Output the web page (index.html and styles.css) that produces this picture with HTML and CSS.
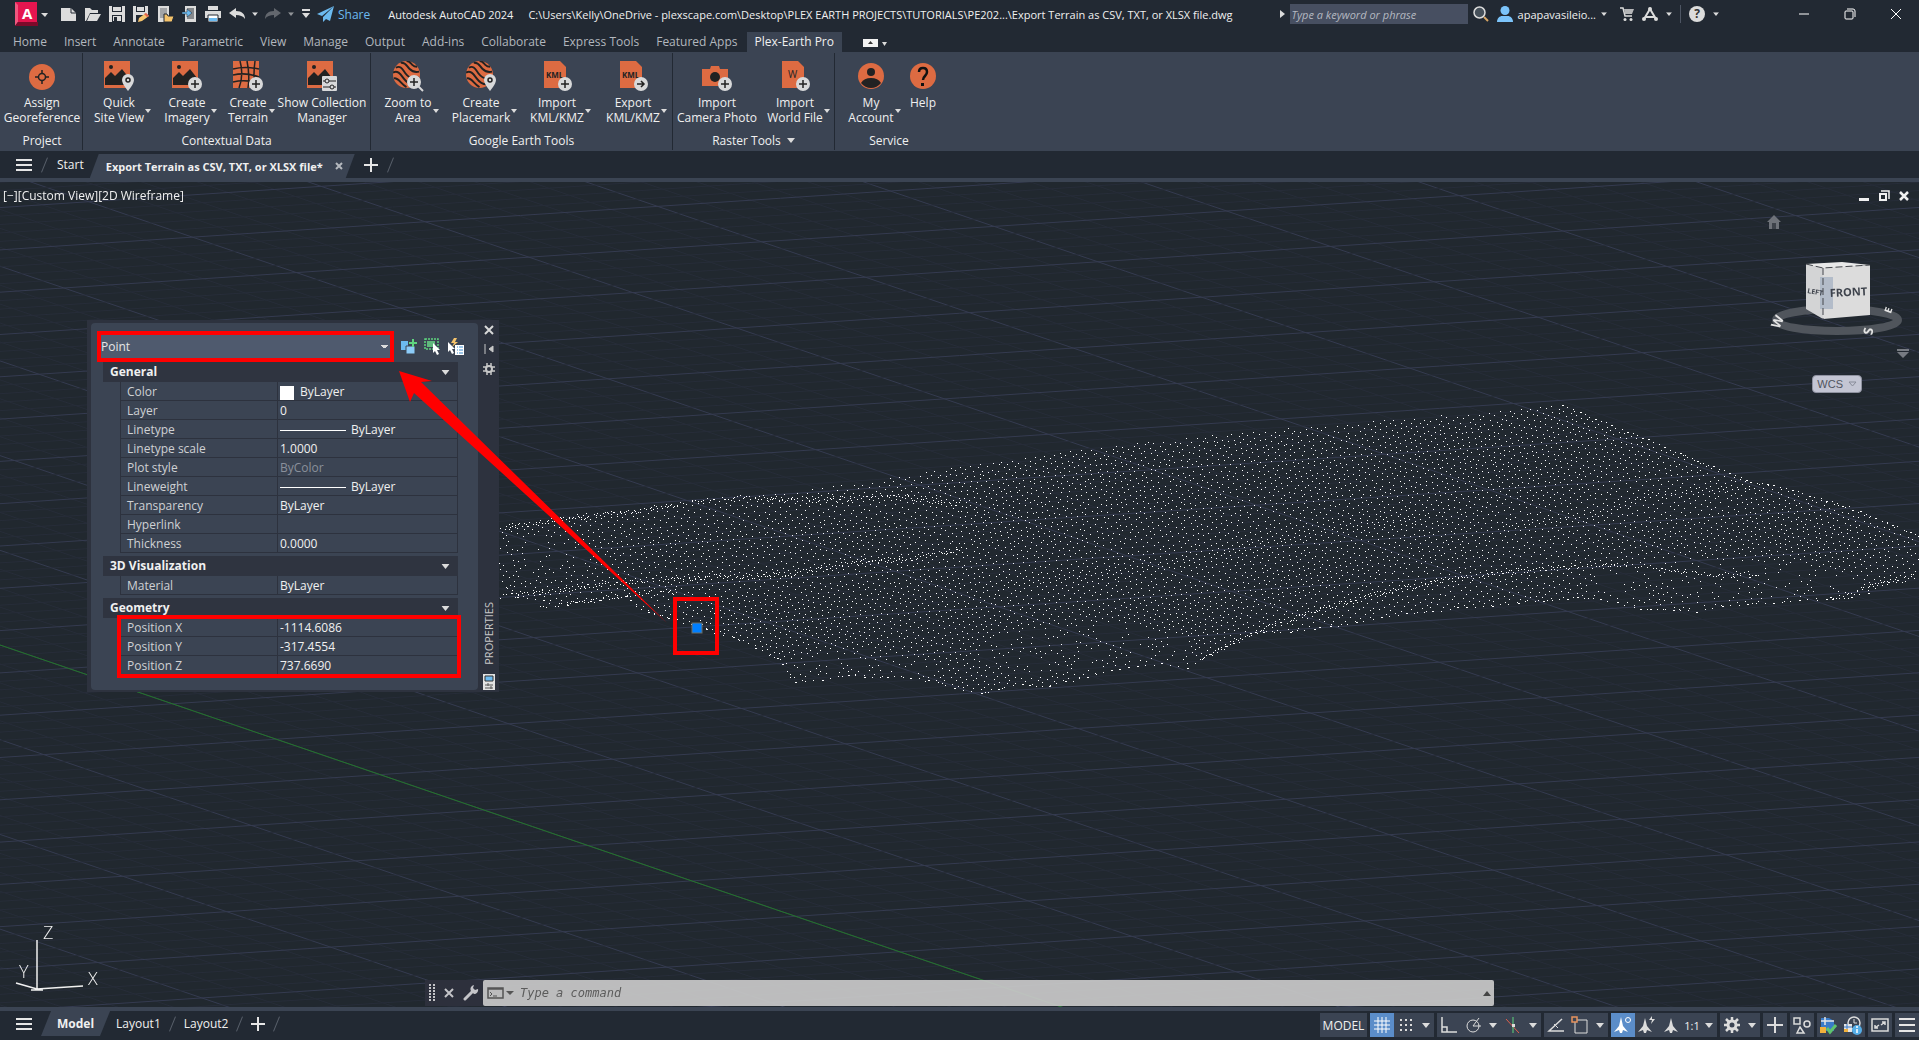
FILE: index.html
```html
<!DOCTYPE html>
<html lang="en">
  <head>
    <meta charset="UTF-8" />
    <meta name="viewport" content="width=device-width, initial-scale=1.0" />
    <title>Autodesk AutoCAD 2024</title>
    <link rel="stylesheet" href="styles.css">
  </head>
  <body>
    <!-- shared icon pieces -->
    <svg class="sprite" aria-hidden="true">
      <symbol id="caret" viewBox="0 0 8 5"><path d="M0 0h8L4 5z" fill="#dcdcdc" /></symbol>
      <symbol id="plus-badge" viewBox="0 0 14 14"><circle cx="7" cy="7" r="7" fill="#d8d9da" /><path d="M7 3v8M3 7h8" stroke="#222" stroke-width="1.5" /></symbol>
      <symbol id="pin" viewBox="0 0 12 17"><path d="M6 0a6 6 0 0 0-6 6c0 4 6 11 6 11s6-7 6-11a6 6 0 0 0-6-6z" fill="#d8d9da" /><circle cx="6" cy="6" r="2" fill="none" stroke="#222" stroke-width="1.5" /></symbol>
      <symbol id="photo" viewBox="0 0 26 27"><path d="M0 0h26v27H0z" fill="#dd6b42" /><path d="M1 24V17l6-6 4 4 7-7 7 9v7z" fill="#222" /><circle cx="7" cy="6" r="2" fill="#222" /></symbol>
      <symbol id="globe" viewBox="0 0 28 28"><circle cx="14" cy="14" r="14" fill="#dd6b42" /><path d="M3 7c5-3 7 2 10 6s7 7 14 4M8 2c5-1 6 3 9 6s6 4 10 3M14 0c3 0 4 2 6 4s3 2 5 2M0 12c5-3 8 2 11 6s6 7 12 6M1 18c5-1 7 6 13 9" fill="none" stroke="#222" stroke-width="2" /></symbol>
      <symbol id="sheet" viewBox="0 0 22 27"><path d="M0 0h16l6 6v21H0z" fill="#dd6b42" /></symbol>
    </svg>

    <header class="titlebar">
      <button class="app-logo" aria-label="Application menu">
        <svg width="34" height="26" viewBox="0 0 34 26"><path d="M1 1h22v20H1z" fill="#e5154f" /><path d="M1 1l3 3v17l-3 4z" fill="#f0577f" /><path d="M1 25l3-4h20v4z" fill="#7c0a2a" /><text x="8" y="18" font-size="15" font-weight="bold" fill="#fff">A</text><path d="M27 12h7l-3 4z" fill="#dcdcdc" /></svg>
      </button>
      <nav class="quick-access">
        <button aria-label="New"><svg width="18" height="18" viewBox="0 0 18 18"><path d="M1 3h10l5 5v8H1z" fill="#dcdcdc" /><path d="M11 3v5h5" fill="none" stroke="#222933" /></svg></button>
        <button aria-label="Open"><svg width="18" height="18" viewBox="0 0 18 18"><path d="M1 16V3h5l2 2h6v3H6l-4 8z" fill="#dcdcdc" /><path d="M6 9h11l-4 7H3z" fill="#dcdcdc" /></svg></button>
        <button aria-label="Save"><svg width="18" height="18" viewBox="0 0 18 18"><path d="M1 1h16v16H1z" fill="#dcdcdc" /><path d="M4 1h10v6H4zM4 10h10v7H4z" fill="#222933" /><path d="M5 2h8v4H5zM5 11h8v5H5z" fill="#dcdcdc" /><path d="M6 12h3v4H6z" fill="#222933" /></svg></button>
        <button aria-label="Save as"><svg width="18" height="18" viewBox="0 0 18 18"><path d="M1 1h15v8l-7 8H1z" fill="#dcdcdc" /><path d="M4 1h9v6H4zM4 10h8v7H4z" fill="#222933" /><path d="M5 2h7v4H5z" fill="#dcdcdc" /><path d="M6 17l1-4 7-5 3 3-7 5z" fill="#f5c36b" /><path d="M14 8l3 3-2 1-3-3z" fill="#e0604c" /></svg></button>
        <button aria-label="Open from mobile"><svg width="18" height="18" viewBox="0 0 18 18"><path d="M2 1h11v16H2z" fill="#dcdcdc" /><path d="M4 3h7v10H4z" fill="#a3a5a8" /><path d="M8 9h3l1 2h6l-2 6H8z" fill="#f5c36b" stroke="#222933" /></svg></button>
        <button aria-label="Save to mobile"><svg width="18" height="18" viewBox="0 0 18 18"><path d="M5 1h11v16H5z" fill="#dcdcdc" /><path d="M7 3h7v11H7z" fill="#85888c" /><path d="M2 7h5V4l5 4-5 4V9H2z" fill="#6cbaf0" stroke="#222933" stroke-width="0.5" /></svg></button>
        <button aria-label="Plot"><svg width="18" height="18" viewBox="0 0 18 18"><path d="M4 1h10v4H4zM1 6h16v7H1z" fill="#dcdcdc" /><path d="M4 10h10v7H4z" fill="#fff" stroke="#222933" /><path d="M5 13h8v3H5z" fill="#6cbaf0" /></svg></button>
        <button aria-label="Undo"><svg width="18" height="18" viewBox="0 0 18 18"><path d="M1 8l7-5v3c6 0 9 3 9 8-2-3-5-4-9-4v3z" fill="#dcdcdc" /></svg></button>
        <svg class="mini" viewBox="0 0 8 5"><use href="#caret" /></svg>
        <button aria-label="Redo"><svg width="18" height="18" viewBox="0 0 18 18"><path d="M17 8l-7-5v3c-6 0-9 3-9 8 2-3 5-4 9-4v3z" fill="#63676e" /></svg></button>
        <svg class="mini dim" viewBox="0 0 8 5"><use href="#caret" /></svg>
        <button class="customize" aria-label="Customize"><svg width="8" height="10" viewBox="0 0 8 10"><path d="M0 0h8v2H0zM0 4h8L4 9z" fill="#dcdcdc" /></svg></button>
      </nav>
      <button class="share">
        <svg width="17" height="16" viewBox="0 0 17 16"><path d="M17 0L0 8l5 2zM17 0L6 11v5l3-3 4 2z" fill="#6cbaf0" /></svg>
        Share
      </button>
      <div class="doc-title"><span>Autodesk AutoCAD 2024</span><span>C:\Users\Kelly\OneDrive - plexscape.com\Desktop\PLEX EARTH PROJECTS\TUTORIALS\PE202...\Export Terrain as CSV, TXT, or XLSX file.dwg</span></div>
      <div class="search">
        <svg width="5" height="8" viewBox="0 0 5 8"><path d="M0 0l5 4-5 4z" fill="#dcdcdc" /></svg>
        <input type="text" aria-label="Search" placeholder="Type a keyword or phrase">
        <svg width="16" height="16" viewBox="0 0 16 16"><circle cx="6.500" cy="6.500" r="5.500" fill="#46505a" stroke="#dcdcdc" stroke-width="1.500" /><path d="M11 11l4 4" stroke="#d9a765" stroke-width="2" /></svg>
      </div>
      <div class="account">
        <svg width="16" height="16" viewBox="0 0 16 16"><circle cx="8" cy="4.500" r="4.500" fill="#7cc4fb" /><path d="M0 16c0-4 3-6 5-6h6c2 0 5 2 5 6z" fill="#7cc4fb" /></svg>
        <span>apapavasileio...</span>
        <svg class="mini" viewBox="0 0 8 5"><use href="#caret" /></svg>
      </div>
      <div class="title-tools">
        <svg width="14" height="14" viewBox="0 0 14 14"><path d="M0 1h3l2 8h7" fill="none" stroke="#dcdcdc" stroke-width="1.500" /><path d="M4 2h10l-2 5H5z" fill="#b5b6b8" /><circle cx="5" cy="12.500" r="1.500" fill="#dcdcdc" /><circle cx="11" cy="12.500" r="1.500" fill="#dcdcdc" /></svg>
        <svg width="16" height="14" viewBox="0 0 16 14"><path d="M2 12L8 2l6 10M4 10h8" fill="none" stroke="#dcdcdc" stroke-width="2" /><circle cx="8" cy="2" r="2" fill="#dcdcdc" /><circle cx="2" cy="12" r="2" fill="#dcdcdc" /><circle cx="14" cy="12" r="2" fill="#dcdcdc" /></svg>
        <svg class="mini" viewBox="0 0 8 5"><use href="#caret" /></svg>
        <i class="divider"></i>
        <button class="help" aria-label="Help">?</button>
        <svg class="mini" viewBox="0 0 8 5"><use href="#caret" /></svg>
      </div>
      <div class="window-buttons">
        <button aria-label="Minimize"><svg width="12" height="12" viewBox="0 0 12 12"><path d="M1 6h10" stroke="#fff" /></svg></button>
        <button aria-label="Restore"><svg width="12" height="12" viewBox="0 0 12 12" fill="none" stroke="#fff"><rect x="1" y="3" width="8" height="8" rx="1" /><path d="M3 1h6q2 0 2 2v6" /></svg></button>
        <button aria-label="Close"><svg width="12" height="12" viewBox="0 0 12 12"><path d="M1 1l10 10M11 1L1 11" stroke="#fff" /></svg></button>
      </div>
    </header>

    <nav class="ribbon-tabs">
      <a href="#">Home</a>
      <a href="#">Insert</a>
      <a href="#">Annotate</a>
      <a href="#">Parametric</a>
      <a href="#">View</a>
      <a href="#">Manage</a>
      <a href="#">Output</a>
      <a href="#">Add-ins</a>
      <a href="#">Collaborate</a>
      <a href="#">Express Tools</a>
      <a href="#">Featured Apps</a>
      <a href="#" class="active">Plex-Earth Pro</a>
      <button class="collapse" aria-label="Minimize ribbon"><svg width="25" height="8" viewBox="0 0 25 8"><path d="M0 0h15v8H0z" fill="#f2f2f2" /><path d="M5 5h5L7.500 2z" fill="#333" /><path d="M19 3h5l-2.500 4z" fill="#dcdcdc" /></svg></button>
    </nav>

    <section class="ribbon">
      <div class="panel project">
        <div class="tools">
          <button class="tool">
            <svg viewBox="0 0 32 32"><circle cx="16" cy="17" r="13" fill="#dd6b42" /><circle cx="16" cy="17" r="3.500" fill="none" stroke="#222" stroke-width="1.500" /><path d="M16 10v4M16 20v4M9 17h4M19 17h4" stroke="#222" stroke-width="1.500" /></svg>
            <span>Assign<br>Georeference</span>
          </button>
        </div>
        <h3>Project</h3>
      </div>
      <div class="panel context">
        <div class="tools">
          <button class="tool drop">
            <svg viewBox="0 0 32 32"><use href="#photo" x="1" y="1" width="26" height="27" /><use href="#pin" x="19" y="14" width="12" height="17" /></svg>
            <span>Quick<br>Site View</span>
          </button>
          <button class="tool drop">
            <svg viewBox="0 0 32 32"><use href="#photo" x="1" y="1" width="26" height="27" /><use href="#plus-badge" x="17" y="17" width="14" height="14" /></svg>
            <span>Create<br>Imagery</span>
          </button>
          <button class="tool drop">
            <svg viewBox="0 0 32 32"><path d="M1 1h26v27H1z" fill="#dd6b42" /><path d="M8 1q4 14-1 27M15 1q3 14 1 27M23 1q-2 14 0 27M1 9q12-3 26 0M1 15q13-3 26 2M1 22q12-3 26 1" fill="none" stroke="#222" stroke-width="1.500" /><use href="#plus-badge" x="17" y="17" width="14" height="14" /></svg>
            <span>Create<br>Terrain</span>
          </button>
          <button class="tool">
            <svg viewBox="0 0 32 32"><use href="#photo" x="1" y="1" width="26" height="27" /><rect x="16" y="16" width="15" height="15" rx="1" fill="#d8d9da" /><path d="M17 21h13M17 27h13" stroke="#222" /><circle cx="21" cy="21" r="2" fill="#d8d9da" stroke="#222" /><circle cx="26" cy="27" r="2" fill="#d8d9da" stroke="#222" /></svg>
            <span>Show Collection<br>Manager</span>
          </button>
        </div>
        <h3>Contextual Data</h3>
      </div>
      <div class="panel google">
        <div class="tools">
          <button class="tool drop">
            <svg viewBox="0 0 32 32"><use href="#globe" x="1" y="1" width="27" height="27" /><path d="M26 26l5 5" stroke="#d8d9da" stroke-width="2" /><use href="#plus-badge" x="15" y="15" width="14" height="14" /></svg>
            <span>Zoom to<br>Area</span>
          </button>
          <button class="tool drop">
            <svg viewBox="0 0 32 32"><use href="#globe" x="1" y="1" width="27" height="27" /><use href="#pin" x="19" y="14" width="12" height="17" /></svg>
            <span>Create<br>Placemark</span>
          </button>
          <button class="tool drop">
            <svg viewBox="0 0 32 32"><use href="#sheet" x="3" y="1" width="22" height="27" /><text x="5" y="18" font-size="8" font-weight="bold" fill="#222">KML</text><use href="#plus-badge" x="17" y="17" width="14" height="14" /></svg>
            <span>Import<br>KML/KMZ</span>
          </button>
          <button class="tool drop">
            <svg viewBox="0 0 32 32"><use href="#sheet" x="3" y="1" width="22" height="27" /><text x="5" y="18" font-size="8" font-weight="bold" fill="#222">KML</text><circle cx="24" cy="24" r="7" fill="#d8d9da" /><path d="M20 24h7M24 21l3 3-3 3" fill="none" stroke="#222" stroke-width="1.500" /></svg>
            <span>Export<br>KML/KMZ</span>
          </button>
        </div>
        <h3>Google Earth Tools</h3>
      </div>
      <div class="panel raster">
        <div class="tools">
          <button class="tool">
            <svg viewBox="0 0 32 32"><path d="M1 9h8l1-3h8l1 3h8v17H1z" fill="#dd6b42" /><circle cx="14" cy="17" r="5" fill="#222" /><use href="#plus-badge" x="17" y="17" width="14" height="14" /></svg>
            <span>Import<br>Camera Photo</span>
          </button>
          <button class="tool drop">
            <svg viewBox="0 0 32 32"><use href="#sheet" x="3" y="1" width="22" height="27" /><text x="9" y="18" font-size="10" fill="#222">W</text><use href="#plus-badge" x="17" y="17" width="14" height="14" /></svg>
            <span>Import<br>World File</span>
          </button>
        </div>
        <h3>Raster Tools <svg class="mini" viewBox="0 0 8 5"><use href="#caret" /></svg></h3>
      </div>
      <div class="panel service">
        <div class="tools">
          <button class="tool drop">
            <svg viewBox="0 0 32 32"><circle cx="16" cy="16" r="13" fill="#dd6b42" /><circle cx="16" cy="12" r="4" fill="#222" /><path d="M6 23q3-5 10-5t10 5q-4 5-10 5t-10-5z" fill="#222" /></svg>
            <span>My<br>Account</span>
          </button>
          <button class="tool">
            <svg viewBox="0 0 32 32"><circle cx="16" cy="16" r="13" fill="#dd6b42" /><path d="M12 12q0-4 4-4t4 4q0 2-2 4t-2 4" fill="none" stroke="#111" stroke-width="2.500" /><path d="M14 23h3v3h-3z" fill="#111" /></svg>
            <span>Help</span>
          </button>
        </div>
        <h3>Service</h3>
      </div>
    </section>

    <nav class="file-tabs">
      <button class="menu" aria-label="File tab menu"><svg width="16" height="12" viewBox="0 0 16 12"><path d="M0 1h16M0 6h16M0 11h16" stroke="#e6e6e6" stroke-width="2" /></svg></button>
      <i class="slash"></i>
      <a href="#">Start</a>
      <div class="file-tab"><a href="#">Export Terrain as CSV, TXT, or XLSX file*</a><button aria-label="Close file"><svg width="8" height="8" viewBox="0 0 8 8"><path d="M1 1l6 6M7 1L1 7" stroke="#b4b8be" stroke-width="2" /></svg></button></div>
      <button class="add" aria-label="New drawing"><svg width="14" height="14" viewBox="0 0 14 14"><path d="M7 0v14M0 7h14" stroke="#e6e6e6" stroke-width="2" /></svg></button>
      <i class="slash"></i>
    </nav>

    <main class="viewport">
      <canvas id="scene"></canvas>
      <p class="view-label">[−][Custom View][2D Wireframe]</p>

      <div class="view-window">
        <button aria-label="Minimize view"><svg width="12" height="12" viewBox="0 0 12 12"><path d="M1 8h10v3H1z" fill="#f0f0f0" /></svg></button>
        <button aria-label="Restore view"><svg width="12" height="12" viewBox="0 0 12 12"><path d="M3 1h8v8" fill="none" stroke="#f0f0f0" stroke-width="1.500" /><path d="M2 4h6v6H2z" fill="none" stroke="#f0f0f0" stroke-width="2" /></svg></button>
        <button aria-label="Close view"><svg width="12" height="12" viewBox="0 0 12 12"><path d="M2 2l8 8M10 2l-8 8" stroke="#f0f0f0" stroke-width="2.500" /></svg></button>
      </div>

      <svg class="view-cube" width="150" height="150" viewBox="0 0 150 150">
        <path d="M2 12L9 5l7 7h-2v7H4v-7z" fill="#6e7279" /><path d="M7 13h4v6H7z" fill="#3d424a" />
        <ellipse cx="72" cy="110" rx="61" ry="11" fill="none" stroke="#50555c" stroke-width="8" />
        <path d="M41 54l36-2 28 3-47 4z" fill="#e9e9e9" />
        <path d="M41 54l17 4v51l-17-10z" fill="#d3d4d5" />
        <path d="M58 58l47-3v50l-47 4z" fill="#dcdcdc" />
        <path d="M55 67h13v32H55z" fill="#a9b4c4" opacity="0.8" />
        <path d="M41 54l17 4 47-3M58 58v51" fill="none" stroke="#44474c" stroke-dasharray="7 3" />
        <text x="42" y="83" font-size="7" font-weight="bold" fill="#3e434c" transform="rotate(10 42 83)">LEFT</text>
        <text x="65" y="87" font-size="11" font-weight="bold" fill="#3e434c" transform="rotate(-3 65 87)">FRONT</text>
        <text x="13" y="116" text-anchor="middle" font-size="13" font-weight="bold" fill="#e4e4e4" transform="rotate(-65 13 112)">W</text>
        <text x="103" y="126" text-anchor="middle" font-size="13" font-weight="bold" fill="#e4e4e4" transform="rotate(-80 103 121)">S</text>
        <text x="123" y="104" text-anchor="middle" font-size="10" font-weight="bold" fill="#e4e4e4" transform="rotate(-70 123 100)">E</text>
        <path d="M132 139h12v2h-12zM132 142h12l-6 6z" fill="#777b82" />
      </svg>
      <button class="wcs">WCS <svg width="9" height="6" viewBox="0 0 9 6"><path d="M1 1h7L4.500 5z" fill="none" stroke="#888c99" /></svg></button>

      <aside class="palette">
        <div class="palette-body">
          <div class="selector">
            <select aria-label="Selected object"><option>Point</option></select>
            <button aria-label="Toggle PICKADD"><svg width="17" height="17" viewBox="0 0 17 17"><path d="M1 3h7v9H1z" fill="#6cbaf0" /><path d="M6 8h9v8H6z" fill="#8ccbf8" stroke="#3b4453" /><path d="M13 1v8M9 5h8" stroke="#5fd47f" stroke-width="2" /></svg></button>
            <button aria-label="Select objects"><svg width="17" height="17" viewBox="0 0 17 17"><path d="M1 1h13v10H1z" fill="none" stroke="#5fd47f" stroke-width="1.500" stroke-dasharray="2 1" /><path d="M3 3h8v6H3z" fill="#5fb87c" /><path d="M9 5v10l2-2 2 4 2-1-2-4h3z" fill="#fff" /></svg></button>
            <button aria-label="Quick select"><svg width="17" height="17" viewBox="0 0 17 17"><path d="M7 0L4 5h3L5 9l6-5H8l2-4z" fill="#f5c36b" /><path d="M1 4v10l2-2 2 4 2-1-2-4h3z" fill="#fff" /><path d="M8 7h9v10H8z" fill="#fff" /><path d="M10 9h1M12 9h4M10 12h1M12 12h4M10 15h1M12 15h4" stroke="#3a8dd0" /></svg></button>
          </div>

          <h4>General <svg class="fold" viewBox="0 0 8 5"><use href="#caret" /></svg></h4>
          <table>
            <tr><th>Color</th><td><i class="swatch"></i>ByLayer</td></tr>
            <tr><th>Layer</th><td>0</td></tr>
            <tr><th>Linetype</th><td><i class="line"></i>ByLayer</td></tr>
            <tr><th>Linetype scale</th><td>1.0000</td></tr>
            <tr><th>Plot style</th><td class="muted">ByColor</td></tr>
            <tr><th>Lineweight</th><td><i class="line"></i>ByLayer</td></tr>
            <tr><th>Transparency</th><td>ByLayer</td></tr>
            <tr><th>Hyperlink</th><td></td></tr>
            <tr><th>Thickness</th><td>0.0000</td></tr>
          </table>

          <h4>3D Visualization <svg class="fold" viewBox="0 0 8 5"><use href="#caret" /></svg></h4>
          <table>
            <tr><th>Material</th><td>ByLayer</td></tr>
          </table>

          <h4>Geometry <svg class="fold" viewBox="0 0 8 5"><use href="#caret" /></svg></h4>
          <table class="marked">
            <tr><th>Position X</th><td>-1114.6086</td></tr>
            <tr><th>Position Y</th><td>-317.4554</td></tr>
            <tr><th>Position Z</th><td>737.6690</td></tr>
          </table>
        </div>
        <div class="palette-bar">
          <svg width="10" height="10" viewBox="0 0 10 10"><path d="M1 1l8 8M9 1L1 9" stroke="#d8d8d8" stroke-width="2" /></svg>
          <svg width="10" height="10" viewBox="0 0 10 10"><path d="M1 0v10M9 2v6L5 5z" fill="#c8c8c8" stroke="#c8c8c8" /></svg>
          <svg width="12" height="12" viewBox="0 0 12 12"><circle cx="6" cy="6" r="3" fill="none" stroke="#c8c8c8" stroke-width="2" /><path d="M4 0v3M8 0v3M4 9v3M8 9v3M0 4h3M0 8h3M9 4h3M9 8h3" stroke="#c8c8c8" stroke-width="1.500" /></svg>
          <span>PROPERTIES</span>
          <svg width="12" height="16" viewBox="0 0 12 16"><path d="M0 0h12v16H0z" fill="#e2e2e2" /><path d="M2 2h8v5H2z" fill="#6cbaf0" stroke="#333" /><path d="M2 11h8M2 14h8M5 9v3M8 12v3" stroke="#555" /></svg>
        </div>
      </aside>

      <!-- call-outs over the drawing -->
      <svg class="callouts" width="720" height="500" viewBox="0 0 720 500">
        <path d="M399 189l33 10-11 1 246 241L414 211l-4 9z" fill="#f00" />
        <rect x="675" y="417" width="42" height="54" fill="none" stroke="#f00" stroke-width="4" />
        <rect x="692" y="441" width="10" height="10" fill="#007fff" stroke="#6d6f66" />
      </svg>

      <svg class="ucs" width="110" height="80" viewBox="0 0 110 80">
        <path d="M37 20v49M37 69l46-3M37 69l-21-6M31 70h12" fill="none" stroke="#f0f0f0" stroke-width="1.500" />
        <text x="43" y="19">Z</text><text x="19" y="58">Y</text><text x="88" y="65">X</text>
      </svg>

      <div class="command">
        <div class="command-tools">
          <svg width="6" height="18" viewBox="0 0 6 18"><path d="M1 0v18M5 0v18" stroke="#c4c4c8" stroke-width="2" stroke-dasharray="2 1" /></svg>
          <svg width="10" height="10" viewBox="0 0 10 10"><path d="M1 1l8 8M9 1L1 9" stroke="#c4c4c8" stroke-width="2" /></svg>
          <svg width="16" height="16" viewBox="0 0 16 16"><path d="M2 14l7-7" stroke="#c4c4c8" stroke-width="3" stroke-linecap="round" /><path d="M15 4l-3 1-2-2 1-3a4 4 0 0 0-3 6l3 3a4 4 0 0 0 4-5z" fill="#c4c4c8" /></svg>
        </div>
        <div class="command-line">
          <svg width="27" height="12" viewBox="0 0 27 12"><path d="M1 1h15v10H1zM1 2h15" fill="none" stroke="#555" stroke-width="1.500" /><path d="M3 5l2 2-2 2M6 9h4" fill="none" stroke="#555" /><path d="M19 4h8l-4 4z" fill="#555" /></svg>
          <input type="text" aria-label="Command" placeholder="Type a command">
          <svg width="8" height="5" viewBox="0 0 8 5"><path d="M0 5h8L4 0z" fill="#444" /></svg>
        </div>
      </div>
    </main>

    <footer class="statusbar">
      <nav class="layouts">
        <button class="menu" aria-label="Layout menu"><svg width="16" height="12" viewBox="0 0 16 12"><path d="M0 1h16M0 6h16M0 11h16" stroke="#e6e6e6" stroke-width="2" /></svg></button>
        <a href="#" class="model">Model</a>
        <a href="#">Layout1</a>
        <i class="slash"></i>
        <a href="#">Layout2</a>
        <i class="slash"></i>
        <button class="add" aria-label="New layout"><svg width="14" height="14" viewBox="0 0 14 14"><path d="M7 0v14M0 7h14" stroke="#e6e6e6" stroke-width="2" /></svg></button>
        <i class="slash"></i>
      </nav>
      <div class="status-tools">
        <div class="group"><button class="space">MODEL</button></div>
        <div class="group">
          <button class="on" aria-label="Grid"><svg viewBox="0 0 24 24"><path d="M8 4v16M12 4v16M16 4v16M4 8h16M4 12h16M4 16h16" stroke="#fff" fill="none" /></svg></button>
          <button aria-label="Snap"><svg viewBox="0 0 24 24"><path d="M6 7h13M6 12h13M6 17h13" stroke="#dcdcdc" stroke-width="2" stroke-dasharray="2 3" /></svg></button>
          <svg class="down" viewBox="0 0 8 5"><use href="#caret" /></svg>
        </div>
        <div class="group">
          <button aria-label="Ortho"><svg viewBox="0 0 24 24"><path d="M5 4v15h15M5 14h5v5" fill="none" stroke="#dcdcdc" stroke-width="1.500" /></svg></button>
          <button aria-label="Polar"><svg viewBox="0 0 24 24"><circle cx="12" cy="13" r="6" fill="none" stroke="#dcdcdc" /><path d="M12 13h8M12 13l6-8" stroke="#dcdcdc" /></svg></button>
          <svg class="down" viewBox="0 0 8 5"><use href="#caret" /></svg>
          <button aria-label="Isometric drafting"><svg viewBox="0 0 24 24"><path d="M5 6l13 14" stroke="#e0604c" /><path d="M12 4v16" stroke="#5fd47f" /><path d="M11 11h3v3h-3z" fill="#dcdcdc" /></svg></button>
          <svg class="down" viewBox="0 0 8 5"><use href="#caret" /></svg>
        </div>
        <div class="group">
          <button aria-label="Object snap tracking"><svg viewBox="0 0 24 24"><path d="M18 6L5 18h15" fill="none" stroke="#dcdcdc" stroke-width="1.500" /><path d="M10 11l4 4" stroke="#dcdcdc" /></svg></button>
          <button aria-label="Object snap"><svg viewBox="0 0 24 24"><path d="M7 7h12v13H7z" fill="none" stroke="#dcdcdc" /><path d="M4 4h5v5H4z" fill="#3b4453" stroke="#e8935e" stroke-width="1.500" /></svg></button>
          <svg class="down" viewBox="0 0 8 5"><use href="#caret" /></svg>
        </div>
        <div class="group">
          <button class="on" aria-label="Annotation visibility"><svg viewBox="0 0 24 24"><path d="M10 4l2 9 5 6-5-2-1 3H9l-1-3-5 2 5-6z" fill="#fff" /><circle cx="17" cy="7" r="2.500" fill="none" stroke="#fff" /></svg></button>
          <button aria-label="Auto scale"><svg viewBox="0 0 24 24"><path d="M10 5l2 8 5 6-5-2-1 3H9l-1-3-5 2 5-6z" fill="#dcdcdc" /><path d="M17 3l-3 4h3l-1 4 4-5h-3z" fill="#dcdcdc" /></svg></button>
          <button aria-label="Annotation scale"><svg viewBox="0 0 24 24"><path d="M12 5l2 8 5 6-5-2-1 3h-2l-1-3-5 2 5-6z" fill="#dcdcdc" /></svg></button>
          <button class="scale">1:1</button>
          <svg class="down" viewBox="0 0 8 5"><use href="#caret" /></svg>
        </div>
        <div class="group">
          <button aria-label="Workspace"><svg viewBox="0 0 24 24"><circle cx="12" cy="12" r="4" fill="none" stroke="#dcdcdc" stroke-width="3" /><path d="M12 4v4M12 16v4M4 12h4M16 12h4M6 6l3 3M15 15l3 3M18 6l-3 3M9 15l-3 3" stroke="#dcdcdc" stroke-width="2.500" /></svg></button>
          <svg class="down" viewBox="0 0 8 5"><use href="#caret" /></svg>
        </div>
        <div class="group">
          <button aria-label="Annotation monitor"><svg viewBox="0 0 24 24"><path d="M12 4v16M4 12h16" stroke="#dcdcdc" stroke-width="2" /></svg></button>
        </div>
        <div class="group">
          <button aria-label="Isolate objects"><svg viewBox="0 0 24 24" fill="none" stroke="#dcdcdc" stroke-width="1.500"><path d="M4 5h6v6H4zM10 14l4 6H7z" /><circle cx="17" cy="11" r="3" /></svg></button>
        </div>
        <div class="group">
          <button aria-label="Standards"><svg viewBox="0 0 24 24"><path d="M4 5h8l5 3v10H4z" fill="#3a7bc8" /><path d="M4 8h13M8 4v8" stroke="#e6e6e6" stroke-width="1.500" /><path d="M3 14h6v6H3z" fill="#f2b13c" /><path d="M10 15l3 4 6-7" fill="none" stroke="#5fc46f" stroke-width="3" /></svg></button>
          <button aria-label="Drawing history"><svg viewBox="0 0 24 24"><circle cx="13" cy="10" r="6" fill="none" stroke="#dcdcdc" stroke-width="1.500" /><path d="M13 6v4h3" fill="none" stroke="#dcdcdc" /><path d="M3 11h8v8H3z" fill="#e6e6e6" /><path d="M3 14h8M6 11v8" stroke="#3a7bc8" /><path d="M3 16h4v3H3z" fill="#f2b13c" /><circle cx="16" cy="17" r="5" fill="#55aee8" /><path d="M16 16v4M16 13v2" stroke="#fff" stroke-width="1.500" /></svg></button>
        </div>
        <div class="group">
          <button aria-label="Clean screen"><svg viewBox="0 0 24 24" fill="none" stroke="#dcdcdc" stroke-width="1.500"><path d="M4 6h16v12H4zM14 9h3v3M17 9l-4 3M10 15H7v-3M7 15l4-3" /></svg></button>
        </div>
        <div class="group">
          <button aria-label="Customization"><svg viewBox="0 0 24 24"><path d="M4 6h16M4 12h16M4 18h16" stroke="#e6e6e6" stroke-width="2" /></svg></button>
        </div>
      </div>
    </footer>
    <script src="scene.js"></script>
  </body>
</html>
```

FILE: styles.css
```css
* {
  box-sizing: border-box;
}

body {
  margin: 0;
  height: 100vh;
  display: flex;
  flex-direction: column;
  overflow: hidden;
  background: #222933;
  color: #f0f0f0;
  font-family: "Segoe UI", "Open Sans", sans-serif;
  font-size: 12px;
}

a {
  color: inherit;
  text-decoration: none;
}

button {
  padding: 0;
  border: none;
  background: none;
  color: inherit;
  font: inherit;
  white-space: nowrap;
}

svg {
  display: block;
  flex: none;
}

.sprite {
  position: absolute;
  width: 0;
  height: 0;
}

.mini {
  width: 6px;
  height: 4px;
}

.dim {
  opacity: 0.6;
}

/* title bar */
.titlebar {
  display: flex;
  align-items: center;
  height: 28px;
  padding-left: 14px;
}

.app-logo {
  margin-right: 12px;
}

.quick-access {
  display: flex;
  align-items: center;
  gap: 6px;
}

.quick-access .customize {
  margin-left: 2px;
}

.share {
  display: flex;
  align-items: center;
  gap: 4px;
  margin-left: 7px;
  color: #6cbaf0;
}

.doc-title {
  display: flex;
  flex: 1;
  gap: 15px;
  min-width: 0;
  margin-left: 18px;
  overflow: hidden;
  font-size: 11px;
  white-space: nowrap;
}

.search {
  display: flex;
  align-items: center;
  gap: 5px;
}

.search input {
  width: 178px;
  height: 20px;
  padding: 0 2px;
  border: none;
  background: #474f61;
  color: #f0f0f0;
  font: italic 11px "Segoe UI", "Open Sans", sans-serif;
}

.search input::placeholder {
  color: #b4b8c0;
  opacity: 1;
}

.account {
  display: flex;
  align-items: center;
  gap: 5px;
  margin-left: 8px;
  font-size: 11px;
}

.title-tools {
  display: flex;
  align-items: center;
  gap: 8px;
  margin-left: 13px;
}

.divider {
  width: 1px;
  height: 18px;
  background: #4d5563;
}

.help {
  width: 16px;
  height: 16px;
  border-radius: 50%;
  background: #dcdcdc;
  color: #333;
  font-weight: bold;
  line-height: 16px;
}

.window-buttons {
  display: flex;
  margin-left: 62px;
}

.window-buttons button {
  display: flex;
  justify-content: center;
  width: 46px;
}

/* ribbon */
.ribbon-tabs {
  display: flex;
  align-items: flex-end;
  gap: 1px;
  height: 24px;
  padding-left: 5px;
  color: #b2b7be;
}

.ribbon-tabs a {
  height: 20px;
  padding: 0 8px;
  line-height: 20px;
}

.ribbon-tabs .active {
  background: #3b4453;
  color: #f0f0f0;
}

.collapse {
  margin: 0 0 5px 20px;
}

.ribbon {
  display: flex;
  height: 99px;
  padding: 1px 0;
  background: #3b4453;
}

.panel {
  display: flex;
  flex-direction: column;
  justify-content: space-between;
  border-right: 1px solid #222933;
}

.tools {
  display: grid;
  justify-items: center;
  align-items: start;
  padding-top: 6px;
}

.project {
  width: 83px;
  padding-left: 2px;
}

.context {
  width: 288px;
}

.context .tools {
  grid-template-columns: 72px 64px 58px 90px;
}

.google {
  width: 302px;
}

.google .tools {
  grid-template-columns: 74px 72px 80px 72px;
}

.raster {
  width: 162px;
}

.raster .tools {
  grid-template-columns: 88px 68px;
}

.service {
  width: 108px;
  border: none;
}

.service .tools {
  grid-template-columns: 72px 32px;
}

.tool {
  display: flex;
  flex-direction: column;
  align-items: center;
  gap: 2px;
  line-height: 15px;
}

.tool > svg {
  width: 32px;
  height: 34px;
}

.drop {
  position: relative;
}

.drop::after {
  content: "";
  position: absolute;
  right: -7px;
  bottom: 12px;
  border: 3px solid transparent;
  border-top: 4px solid #dcdcdc;
  border-bottom: none;
}

.panel h3 {
  display: flex;
  justify-content: center;
  align-items: center;
  gap: 6px;
  margin: 0;
  font-size: 12px;
  font-weight: normal;
  line-height: 19px;
}

.panel h3 .mini {
  width: 8px;
  height: 5px;
}

/* file tabs */
.file-tabs {
  display: flex;
  align-items: center;
  height: 31px;
  padding-left: 16px;
  border-bottom: 4px solid #3b4453;
}

.slash {
  width: 1px;
  height: 16px;
  margin: 0 11px;
  background: #59606b;
  transform: rotate(22deg);
}

.file-tabs .slash {
  margin: 0 12px;
}

.file-tab {
  display: flex;
  align-self: flex-end;
  align-items: center;
  justify-content: space-between;
  width: 265px;
  height: 24px;
  margin-left: 6px;
  padding: 0 12px 0 16px;
  background: #3b4453;
  clip-path: polygon(9px 0, 100% 0, 256px 100%, 0 100%);
  font-size: 11px;
  font-weight: bold;
  white-space: nowrap;
}

.file-tabs .add {
  margin-left: 9px;
}

/* drawing area */
.viewport {
  position: relative;
  flex: 1;
  min-height: 0;
  overflow: hidden;
  background: #21282f;
}

#scene {
  position: absolute;
  width: 100%;
  height: 100%;
}

.view-label {
  position: absolute;
  top: 6px;
  left: 3px;
  margin: 0;
  line-height: 16px;
}

.view-window {
  position: absolute;
  top: 8px;
  right: 9px;
  display: flex;
  gap: 8px;
}

.view-cube {
  position: absolute;
  top: 28px;
  right: 4px;
}

.wcs {
  position: absolute;
  top: 193px;
  right: 57px;
  display: flex;
  align-items: center;
  gap: 5px;
  height: 18px;
  padding: 0 4px;
  border: 1px solid #8f92a0;
  border-radius: 4px;
  background: #c3c5d3;
  color: #50545e;
  font: 11px "Liberation Sans", sans-serif;
}

/* properties palette */
.palette {
  position: absolute;
  top: 138px;
  left: 87px;
  display: flex;
  width: 412px;
  padding: 3px 0 2px 4px;
  background: #2d323e;
}

.palette-body {
  width: 387px;
  padding: 8px 20px 15px 6px;
  border-radius: 4px;
  background: #3b4453;
}

.selector {
  display: flex;
  align-items: center;
  justify-content: space-between;
  width: 367px;
  height: 31px;
}

.selector select {
  width: 297px;
  height: 31px;
  padding: 0;
  border: 4px solid #f00;
  border-radius: 0;
  appearance: none;
  background-color: #4f5a6e;
  background-image:
    linear-gradient(45deg, transparent 50%, #dcdcdc 50%),
    linear-gradient(-45deg, transparent 50%, #dcdcdc 50%);
  background-position: right 5px center, right 1px center;
  background-size: 4px 4px;
  background-repeat: no-repeat;
  color: #e6e6e6;
  font: inherit;
}

.palette h4 {
  display: flex;
  align-items: center;
  justify-content: space-between;
  height: 20px;
  margin: 3px 0 0 6px;
  padding: 0 8px 0 7px;
  background: #2f3440;
  font-size: 12px;
  line-height: 18px;
}

.selector + h4 {
  margin-top: 0;
}

.fold {
  width: 9px;
  height: 5px;
}

.palette table {
  width: 338px;
  margin-left: 23px;
  border-spacing: 0;
  table-layout: fixed;
}

.palette th,
.palette td {
  height: 19px;
  padding: 2px 0 0;
  border: solid #2d323e;
  border-width: 0 1px 1px 0;
  line-height: 16px;
  text-align: left;
}

.palette th {
  width: 158px;
  padding-left: 6px;
  border-left-width: 1px;
  color: #cfd1d4;
  font-weight: normal;
}

.palette td {
  padding-left: 2px;
}

.palette .muted {
  color: #8a909b;
}

.swatch {
  display: inline-block;
  width: 14px;
  height: 14px;
  margin-right: 6px;
  background: #fff;
  vertical-align: middle;
}

.line {
  display: inline-block;
  width: 66px;
  height: 1px;
  margin-right: 5px;
  background: #fff;
  vertical-align: middle;
}

.marked {
  outline: 4px solid #f00;
  outline-offset: -1px;
}

.palette-bar {
  display: flex;
  flex: 1;
  flex-direction: column;
  align-items: center;
  gap: 9px;
  padding-top: 2px;
  color: #c8c8c8;
}

.palette-bar span {
  margin-top: auto;
  font-size: 11px;
  line-height: 14px;
  transform: rotate(180deg);
  writing-mode: vertical-rl;
}

.callouts {
  position: absolute;
  top: 0;
  left: 0;
}

.ucs {
  position: absolute;
  bottom: 7px;
  left: 0;
}

.ucs text {
  fill: #f0f0f0;
  font: 300 18px "Open Sans", sans-serif;
}

/* command line */
.command {
  position: absolute;
  right: 0;
  bottom: 1px;
  left: 0;
  display: flex;
  width: 1069px;
  max-width: 100%;
  height: 26px;
  margin: 0 auto;
}

.command-tools {
  display: flex;
  align-items: center;
  justify-content: space-around;
  width: 58px;
  background: #2d303c;
}

.command-line {
  display: flex;
  flex: 1;
  align-items: center;
  gap: 6px;
  padding: 0 3px 0 4px;
  border-radius: 2px;
  background: rgba(200, 200, 200, 0.93);
}

.command-line input {
  flex: 1;
  padding: 0;
  border: none;
  background: none;
  font: italic 12px "DejaVu Sans Mono", monospace;
}

.command-line input::placeholder {
  color: #5c5c5c;
  opacity: 1;
}

/* status bar */
.statusbar {
  display: flex;
  justify-content: space-between;
  height: 33px;
  border-top: 4px solid #3b4453;
}

.layouts {
  display: flex;
  align-items: center;
  height: 25px;
  padding-left: 16px;
}

.model {
  height: 25px;
  margin: 0 6px 0 9px;
  padding: 0 16px;
  background: #3b4453;
  clip-path: polygon(10px 0, 100% 0, 59px 100%, 0 100%);
  font-weight: bold;
  line-height: 25px;
}

.status-tools {
  display: flex;
  gap: 3px;
  padding-top: 2px;
}

.group {
  display: flex;
  align-items: center;
  height: 24px;
  background: #3b4453;
}

.group button {
  width: 24px;
  height: 24px;
}

.group .on {
  background: #5b8dc9;
}

.group .space {
  width: 47px;
}

.group .scale {
  width: 18px;
  font-size: 11px;
}

.down {
  width: 8px;
  height: 5px;
  margin: 0 4px;
}
```

FILE: scene.js
```js
const canvas = document.getElementById("scene");
const ctx = canvas.getContext("2d");

// outline of the terrain, in drawing area pixels
const outline = [
  [440, 356], [500, 342], [560, 334], [640, 325], [704, 317], [740, 314], [802, 308],
  [918, 290], [1026, 274], [1190, 254], [1562, 223], [1647, 258], [1750, 300],
  [1773, 303], [1842, 323], [1919, 354], [1990, 380], [1919, 390], [1888, 400],
  [1851, 416], [1824, 417], [1746, 421], [1695, 429], [1640, 427], [1599, 416],
  [1567, 416], [1457, 426], [1379, 435], [1312, 448], [1255, 451], [1232, 461],
  [1186, 485], [1160, 481], [1110, 488], [1048, 504], [1021, 502], [979, 511],
  [910, 495], [847, 494], [794, 500], [776, 476], [731, 455], [697, 445],
  [668, 435], [646, 431], [624, 415], [566, 422], [517, 414], [500, 401],
];

// crests where the points crowd together: line, width, strength
const ridges = [
  [[[440, 354], [560, 337], [640, 328], [704, 317], [740, 315], [810, 317], [900, 314], [960, 321]], 12, 0.6],
  [[[500, 414], [560, 407], [610, 400], [700, 395], [790, 391], [850, 380], [910, 376], [960, 366]], 10, 0.6],
  [[[540, 423], [590, 418], [630, 411], [680, 408]], 7, 0.6],
  [[[1200, 477], [1255, 449], [1310, 430], [1380, 410], [1440, 398], [1520, 388], [1590, 382], [1640, 383], [1700, 391], [1760, 394]], 10, 0.6],
  [[[1500, 345], [1540, 340], [1590, 334], [1650, 313], [1750, 305]], 12, 0.5],
  [[[1830, 417], [1880, 400], [1990, 384]], 14, 0.6],
  [[[1000, 402], [1100, 392], [1200, 376], [1320, 348], [1420, 336]], 16, 0.35],
];

// flat ground with few points
const sparse = [
  [1090, 470, 110, 30],
  [1720, 402, 140, 28],
  [860, 484, 80, 16],
  [530, 376, 60, 22],
];

let seed = 7;

function random() {
  seed = (seed * 16807) % 2147483647;
  return seed / 2147483647;
}

function heightAt(line, x) {
  for (let i = 1; i < line.length; i++) {
    const [x0, y0] = line[i - 1];
    const [x1, y1] = line[i];
    if (x >= x0 && x <= x1) return y0 + ((y1 - y0) * (x - x0)) / (x1 - x0);
  }
  return null;
}

function drawLines(slope, start, step, minor, major) {
  const w = canvas.width;
  const h = canvas.height;
  for (let n = -80; n < 160; n++) {
    const y = start + (n * step) / 5;
    if (Math.max(y, y + slope * w) < 0 || Math.min(y, y + slope * w) > h) continue;
    ctx.strokeStyle = n % 5 === 0 ? major : minor;
    ctx.beginPath();
    ctx.moveTo(0, y);
    ctx.lineTo(w, y + slope * w);
    ctx.stroke();
  }
}

function drawTerrain() {
  const shape = new Path2D();
  outline.forEach(([x, y]) => shape.lineTo(x, y));
  shape.closePath();
  ctx.fillStyle = "#fff";
  seed = 7;

  for (let i = -160; i < 20; i++) {
    for (let j = -10; j < 150; j++) {
      const x = 1562 + i * 10.5 + j * 6 + random() * 3 - 1.5;
      let y = 223 - i * 0.87 + j * 2.5 + random() * 2 - 1;
      y += 2 * Math.sin(x / 70 + y / 40) + Math.sin(x / 31 - y / 17);
      ridges.forEach(([line, width, pull]) => {
        const r = heightAt(line, x);
        if (r !== null) y -= pull * (y - r) * Math.exp(-(((y - r) / width) ** 2));
      });
      const thin = sparse.some(([cx, cy, rx, ry]) => ((x - cx) / rx) ** 2 + ((y - cy) / ry) ** 2 < 1);
      if (thin && random() < 0.5) continue;
      if (ctx.isPointInPath(shape, x, y)) ctx.fillRect(Math.round(x), Math.round(y), 1, 1);
    }
  }

  // extra points on the strong crests
  ridges.forEach(([line, width, pull]) => {
    if (pull < 0.6) return;
    for (let x = line[0][0]; x < line[line.length - 1][0]; x += 3) {
      const y = heightAt(line, x) + random() * 5 - 2;
      if (random() < 0.8) ctx.fillRect(x, Math.round(y), 1, 1);
    }
  });

  // points along the right and lower border
  for (let i = 10; i < outline.length - 1; i++) {
    const [x0, y0] = outline[i];
    const [x1, y1] = outline[i + 1];
    const gap = i < 16 ? 6 : 9;
    const count = Math.ceil(Math.hypot(x1 - x0, y1 - y0) / gap);
    for (let k = 0; k < count; k++) {
      const x = Math.round(x0 + ((x1 - x0) * k) / count + random() * 2);
      const y = Math.round(y0 + ((y1 - y0) * k) / count + random() * 2 - 1);
      ctx.fillRect(x, y, k % 3 ? 1 : 2, 1);
    }
  }
}

function draw() {
  canvas.width = canvas.clientWidth;
  canvas.height = canvas.clientHeight;
  drawLines(0.341, 463, 94.7, "#272d39", "#353b50");
  drawLines(-0.0662, 279.4, 42.3, "#272d39", "#353b50");
  ctx.strokeStyle = "#23752a";
  ctx.beginPath();
  ctx.moveTo(0, 463);
  ctx.lineTo(canvas.width, 463 + 0.341 * canvas.width);
  ctx.stroke();
  drawTerrain();
}

window.addEventListener("resize", draw);
draw();
```
